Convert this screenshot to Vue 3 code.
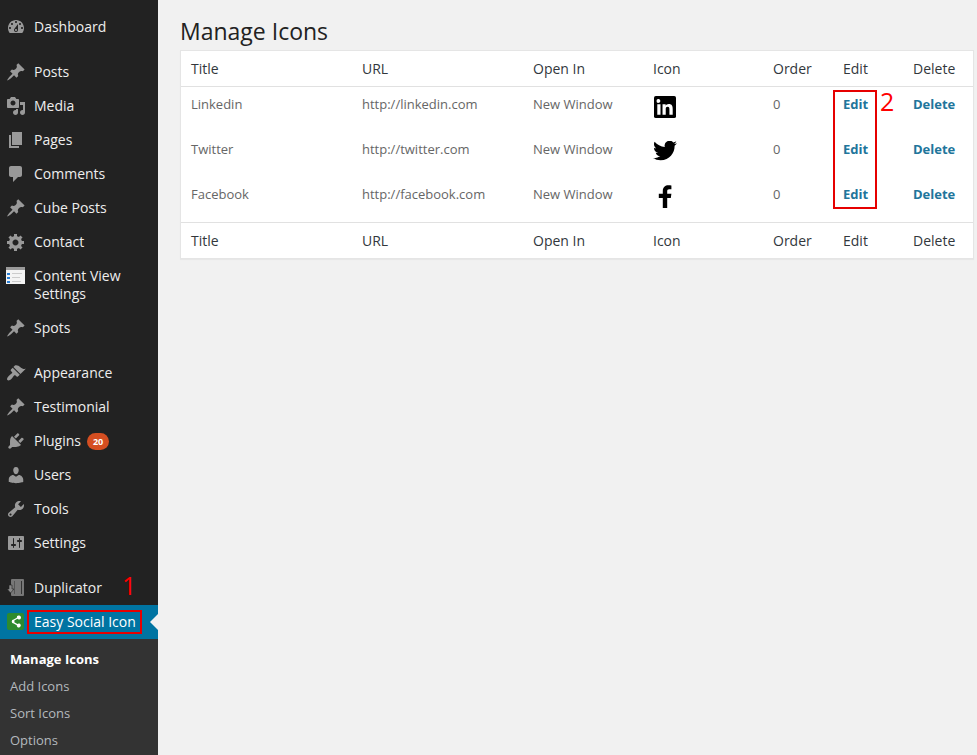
<template>
  <div class="page">
    <aside class="sidebar">
      <ul v-for="(group, g) in menu" :key="g" class="menu-group">
        <li v-for="item in group" :key="item.label" class="menu-item">
          <svg v-if="item.icon" class="menu-icon" viewBox="0 0 20 20"><path :d="icons[item.icon]" /></svg>
          <svg v-else-if="item.custom === 'cv'" class="menu-icon" viewBox="0 0 20 20">
            <rect x="0" y="1" width="19" height="17" fill="#f4f4f4" />
            <rect x="0" y="1" width="19" height="3" fill="#9a9a9a" />
            <rect x="1" y="7" width="3" height="2" fill="#2a7fd5" />
            <rect x="1" y="11" width="3" height="2" fill="#2a7fd5" />
            <rect x="1" y="15" width="3" height="2" fill="#2a7fd5" />
            <rect x="6" y="7" width="10" height="1" fill="#ccc" />
            <rect x="6" y="11" width="8" height="1" fill="#ccc" />
            <rect x="6" y="15" width="9" height="1" fill="#ccc" />
          </svg>
          <svg v-else class="menu-icon" viewBox="0 0 20 20">
            <rect x="5" y="1" width="13" height="17" rx="1" fill="#777" />
            <rect x="15" y="3" width="1" height="13" fill="#333" />
            <rect x="8" y="3" width="1" height="13" fill="#555" />
            <path d="M3 7h3v4h2l-3.5 4L1 11h2z" fill="#888" stroke="#222" stroke-width=".6" />
          </svg>
          <span class="menu-label">{{ item.label }}</span>
          <span v-if="item.badge" class="badge">{{ item.badge }}</span>
        </li>
      </ul>

      <div class="menu-item current">
        <svg class="menu-icon" viewBox="0 0 20 20">
          <rect x="1" y="1" width="17" height="17" rx="2" fill="#2e8b2e" />
          <path d="M13 3.5a2 2 0 1 1-1.6 3.2L8.3 8.6a2 2 0 0 1 0 1.6l3.1 1.8a2 2 0 1 1-.6 1.2L7.7 11.4a2 2 0 1 1 0-4l3.1-1.7A2 2 0 0 1 13 3.5z" fill="#fff" />
        </svg>
        <span class="menu-label">Easy Social Icon</span>
        <span class="mark-one"></span>
        <span class="mark-number one">1</span>
      </div>
      <ul class="submenu">
        <li v-for="(sub, i) in submenu" :key="sub" :class="{ active: i === 0 }">{{ sub }}</li>
      </ul>
    </aside>

    <main class="content">
      <h1>Manage Icons</h1>
      <div class="card">
        <table>
          <colgroup>
            <col v-for="(w, i) in widths" :key="i" :style="{ width: w + 'px' }" />
          </colgroup>
          <thead>
            <tr><th v-for="c in columns" :key="c">{{ c }}</th></tr>
          </thead>
          <tbody>
            <tr v-for="row in rows" :key="row.title">
              <td>{{ row.title }}</td>
              <td>{{ row.url }}</td>
              <td>New Window</td>
              <td class="icon-cell">
                <svg v-if="row.icon === 'linkedin'" class="social linkedin" viewBox="0 0 24 24">
                  <rect x="0" y="0" width="24" height="24" rx="2" fill="#000" />
                  <path fill="#fff" d="M20.4 20.4h-3.6v-5.6c0-1.3 0-3-1.9-3s-2.1 1.4-2.1 2.9v5.7H9.3V9h3.4v1.6c.5-.9 1.7-1.9 3.4-1.9 3.6 0 4.3 2.4 4.3 5.5zM5.3 7.4a2.1 2.1 0 1 1 0-4.1 2.1 2.1 0 0 1 0 4.1zm1.8 13H3.6V9h3.5z" />
                </svg>
                <svg v-else-if="row.icon === 'twitter'" class="social twitter" viewBox="0 0 24 20">
                  <path transform="translate(0 -2.4)" d="M24 4.6a10 10 0 0 1-2.9.8 5 5 0 0 0 2.2-2.8c-1 .6-2 1-3.1 1.2a4.9 4.9 0 0 0-8.4 4.5C7.7 8.1 4.1 6.1 1.6 3.2A4.8 4.8 0 0 0 1 5.6c0 1.7.9 3.2 2.2 4.1a4.9 4.9 0 0 1-2.2-.6v.1a4.9 4.9 0 0 0 3.9 4.8 5 5 0 0 1-2.2.1 4.9 4.9 0 0 0 4.6 3.4A9.9 9.9 0 0 1 0 19.5a14 14 0 0 0 7.6 2.2c9 0 14-7.5 14-14v-.6A10 10 0 0 0 24 4.6z" />
                </svg>
                <svg v-else class="social facebook" viewBox="0 0 14 23">
                  <path d="M9.2 23V12.9h3.6l.6-4.1H9.2V6.3c0-1.2.4-2 2-2h2.2V.5C13 .4 11.8.3 10.4.3 7.3.3 4.8 2.2 4.8 5.9v2.9H.8v4.1h4V23z" />
                </svg>
              </td>
              <td>0</td>
              <td><a>Edit</a></td>
              <td><a>Delete</a></td>
            </tr>
          </tbody>
          <tfoot>
            <tr><th v-for="c in columns" :key="c">{{ c }}</th></tr>
          </tfoot>
        </table>
        <span class="mark-two"></span>
        <span class="mark-number two">2</span>
      </div>
    </main>
  </div>
</template>

<script setup>
const icons = {
  dashboard: 'M3.76 16h12.48c1.1-1.37 1.76-3.11 1.76-5 0-4.42-3.58-8-8-8s-8 3.58-8 8c0 1.89.66 3.63 1.76 5zM10 4c.55 0 1 .45 1 1s-.45 1-1 1-1-.45-1-1 .45-1 1-1zM6 6c.55 0 1 .45 1 1s-.45 1-1 1-1-.45-1-1 .45-1 1-1zm8 0c.55 0 1 .45 1 1s-.45 1-1 1-1-.45-1-1 .45-1 1-1zm-5.37 5.55L12 7v6c0 1.1-.9 2-2 2s-2-.9-2-2c0-.57.24-1.08.63-1.45zM4 10c.55 0 1 .45 1 1s-.45 1-1 1-1-.45-1-1 .45-1 1-1zm12 0c.55 0 1 .45 1 1s-.45 1-1 1-1-.45-1-1 .45-1 1-1zm-5 3c0-.55-.45-1-1-1s-1 .45-1 1 .45 1 1 1 1-.45 1-1z',
  pin: 'M10.44 3.02l1.82-1.82 6.36 6.35-1.83 1.82c-1.05-.68-2.48-.57-3.41.36l-.75.75c-.92.93-1.04 2.35-.35 3.41l-1.83 1.82-2.41-2.41-2.8 2.79c-.42.42-3.38 2.71-3.8 2.29s1.86-3.39 2.28-3.81l2.79-2.79L4.1 9.36l1.83-1.82c1.05.69 2.48.57 3.4-.36l.75-.75c.93-.92 1.05-2.35.36-3.41z',
  media: 'M13 11V4c0-.55-.45-1-1-1h-1.67L9 1H5L3.67 3H2c-.55 0-1 .45-1 1v7c0 .55.45 1 1 1h10c.55 0 1-.45 1-1zM7 4.5c1.38 0 2.5 1.12 2.5 2.5S8.38 9.5 7 9.5 4.5 8.38 4.5 7 5.62 4.5 7 4.5zM14 6h5v10.5c0 1.38-1.12 2.5-2.5 2.5S14 17.88 14 16.5s1.12-2.5 2.5-2.5c.17 0 .34.02.5.05V9h-3V6zm-4 8.05V13h2v3.5c0 1.38-1.12 2.5-2.5 2.5S7 17.88 7 16.5 8.12 14 9.5 14c.17 0 .34.02.5.05z',
  pages: 'M6 15V2h10v13H6zm-1 1h8v2H3V5h2v11z',
  comments: 'M5 2h9c1.1 0 2 .9 2 2v7c0 1.1-.9 2-2 2h-2l-5 5v-5H5c-1.1 0-2-.9-2-2V4c0-1.1.9-2 2-2z',
  gear: 'M18 12h-2.18c-.17.7-.44 1.35-.81 1.93l1.54 1.54-2.1 2.1-1.54-1.54c-.58.36-1.23.63-1.91.79V19H8v-2.18c-.68-.16-1.33-.43-1.91-.79l-1.54 1.54-2.12-2.12 1.54-1.54c-.36-.58-.63-1.23-.79-1.91H1V9.03h2.17c.16-.7.44-1.35.8-1.94L2.43 5.55l2.1-2.1 1.54 1.54c.58-.37 1.24-.64 1.93-.81V2h3v2.18c.68.16 1.33.43 1.91.79l1.54-1.54 2.12 2.12-1.54 1.54c.36.59.64 1.24.8 1.94H18V12zm-8.5 1.5c1.66 0 3-1.34 3-3s-1.34-3-3-3-3 1.34-3 3 1.34 3 3 3z',
  appearance: 'M14.48 11.06L7.41 3.99l1.5-1.5c.5-.56 2.3-.47 3.51.32 1.21.8 1.43 1.28 2.91 2.1 1.18.64 2.45 1.26 4.45.85zm-.71.71L6.7 4.7 4.93 6.47c-.39.39-.39 1.02 0 1.41l1.06 1.06c.39.39.39 1.03 0 1.42-.6.6-1.43 1.11-2.21 1.69-.35.26-.7.53-1.01.84C1.43 14.23.4 16.08 1.4 17.07c.99 1 2.84-.03 4.18-1.36.31-.31.58-.66.85-1.02.57-.78 1.08-1.61 1.69-2.21.39-.39 1.02-.39 1.41 0l1.06 1.06c.39.39 1.02.39 1.41 0z',
  plugins: 'M13.11 4.36L9.87 7.6 8 5.73l3.24-3.24c.35-.34 1.05-.2 1.56.32.52.51.66 1.21.31 1.55zm-8 1.77l.91-1.12 9.01 9.01-1.19.84c-.71.71-2.63 1.16-3.82 1.16H6.14L4.9 17.26c-.59.59-1.54.59-2.12 0-.59-.58-.59-1.53 0-2.12l1.24-1.24v-3.88c0-1.13.4-3.19 1.09-3.89zm7.26 3.97l3.24-3.24c.34-.35 1.04-.21 1.55.31.52.51.66 1.21.31 1.55l-3.24 3.25z',
  users: 'M10 9.25c-2.27 0-2.73-3.44-2.73-3.44C7 4.02 7.82 2 9.97 2c2.16 0 2.98 2.02 2.71 3.81 0 0-.41 3.44-2.68 3.44zm0 2.57L12.72 10c2.39 0 4.52 2.33 4.52 4.53v2.49s-3.65 1.13-7.24 1.13c-3.65 0-7.24-1.13-7.24-1.13v-2.49c0-2.25 1.94-4.48 4.47-4.48z',
  tools: 'M16.68 9.77c-1.34 1.34-3.3 1.67-4.95.99l-5.41 6.52c-.99.99-2.59.99-3.58 0s-.99-2.59 0-3.57l6.52-5.42c-.68-1.65-.35-3.61.99-4.95 1.28-1.28 3.12-1.62 4.72-1.06l-2.89 2.89 2.82 2.82 2.86-2.87c.53 1.58.18 3.39-1.08 4.65zM3.81 16.21c.4.39 1.04.39 1.43 0 .4-.4.4-1.04 0-1.43-.39-.4-1.03-.4-1.43 0-.39.39-.39 1.03 0 1.43z',
  sliders: 'M18 16V4c0-.55-.45-1-1-1H3c-.55 0-1 .45-1 1v12c0 .55.45 1 1 1h14c.55 0 1-.45 1-1zM8 11h1c.55 0 1 .45 1 1s-.45 1-1 1H8v1.5c0 .28-.22.5-.5.5s-.5-.22-.5-.5V13H6c-.55 0-1-.45-1-1s.45-1 1-1h1V5.5c0-.28.22-.5.5-.5s.5.22.5.5V11zm5-2h-1c-.55 0-1-.45-1-1s.45-1 1-1h1V5.5c0-.28.22-.5.5-.5s.5.22.5.5V7h1c.55 0 1 .45 1 1s-.45 1-1 1h-1v5.5c0 .28-.22.5-.5.5s-.5-.22-.5-.5V9z',
}

const menu = [
  [{ label: 'Dashboard', icon: 'dashboard' }],
  [
    { label: 'Posts', icon: 'pin' },
    { label: 'Media', icon: 'media' },
    { label: 'Pages', icon: 'pages' },
    { label: 'Comments', icon: 'comments' },
    { label: 'Cube Posts', icon: 'pin' },
    { label: 'Contact', icon: 'gear' },
    { label: 'Content View Settings', custom: 'cv' },
    { label: 'Spots', icon: 'pin' },
  ],
  [
    { label: 'Appearance', icon: 'appearance' },
    { label: 'Testimonial', icon: 'pin' },
    { label: 'Plugins', icon: 'plugins', badge: 20 },
    { label: 'Users', icon: 'users' },
    { label: 'Tools', icon: 'tools' },
    { label: 'Settings', icon: 'sliders' },
  ],
  [{ label: 'Duplicator', custom: 'dup' }],
]

const submenu = ['Manage Icons', 'Add Icons', 'Sort Icons', 'Options']

const columns = ['Title', 'URL', 'Open In', 'Icon', 'Order', 'Edit', 'Delete']
const widths = [171, 171, 120, 120, 70, 70, 70]

const rows = [
  { title: 'Linkedin', url: 'http://linkedin.com', icon: 'linkedin' },
  { title: 'Twitter', url: 'http://twitter.com', icon: 'twitter' },
  { title: 'Facebook', url: 'http://facebook.com', icon: 'facebook' },
]
</script>

<style>
html,
body {
  background: #f1f1f1;
}
</style>

<style scoped>
.page {
  display: flex;
  height: 755px;
  overflow: hidden;
  font-family: 'Open Sans', sans-serif;
  background: #f1f1f1;
}

.sidebar {
  flex: 0 0 158px;
  padding-top: 10px;
  background: #222;
}

.menu-group {
  list-style: none;
  margin: 0 0 11px;
  padding: 0;
}

.menu-item {
  position: relative;
  display: flex;
  align-items: flex-start;
  padding: 8px 6px 8px 0;
  font-size: 14px;
  line-height: 18px;
  color: #eee;
}

.menu-icon {
  flex: 0 0 20px;
  width: 20px;
  height: 20px;
  margin: -1px 8px -1px 6px;
  fill: #999;
}

.menu-label {
  flex: 0 1 auto;
}

.badge {
  flex: none;
  margin: 1px 0 0 6px;
  padding: 0 6px;
  border-radius: 9px;
  font-size: 9px;
  font-weight: 700;
  line-height: 17px;
  color: #fff;
  background: #d54e21;
}

.current {
  margin-top: -11px;
  color: #fff;
  background: #0074a2;
}

.current::after {
  content: '';
  position: absolute;
  top: 9px;
  right: 0;
  border: 8px solid transparent;
  border-right-color: #f1f1f1;
}

.mark-one {
  position: absolute;
  left: 27px;
  top: 5px;
  width: 115px;
  height: 24px;
  box-sizing: border-box;
  border: 2px solid #e60000;
}

.mark-number {
  position: absolute;
  font-family: 'Open Sans', sans-serif;
  font-size: 25px;
  font-weight: 400;
  line-height: 25px;
  color: #f00;
}

.mark-number.one {
  left: 122px;
  top: -32px;
}

.submenu {
  list-style: none;
  margin: 0;
  padding: 7px 0;
  background: #333;
  font-size: 13px;
  line-height: 27px;
  color: #b4b9be;
}

.submenu li {
  padding-left: 10px;
}

.submenu .active {
  font-weight: 700;
  color: #fff;
}

.content {
  flex: 1;
  min-width: 0;
  padding: 0 3px 0 22px;
}

h1 {
  margin: 17px 0 4px;
  font-size: 23px;
  font-weight: 400;
  line-height: 29px;
  color: #222;
}

.card {
  position: relative;
  border: 1px solid #e5e5e5;
  background: #fff;
  box-shadow: 0 1px 1px rgba(0, 0, 0, 0.04);
}

table {
  width: 792px;
  table-layout: fixed;
  border-collapse: separate;
  border-spacing: 0;
}

th {
  padding: 8px 10px;
  font-size: 14px;
  font-weight: 400;
  line-height: 18px;
  text-align: left;
  color: #32373c;
}

thead th {
  padding-top: 9px;
  border-bottom: 1px solid #e1e1e1;
}

tfoot th {
  padding-top: 9px;
  border-top: 1px solid #e1e1e1;
}

td {
  height: 45px;
  box-sizing: border-box;
  padding: 8px 10px;
  font-size: 13px;
  line-height: 18px;
  vertical-align: top;
  color: #666;
}

td a {
  font-weight: 700;
  color: #21759b;
}

.icon-cell {
  padding-top: 9px;
}

.social {
  display: block;
  fill: #000;
}

.linkedin {
  width: 22px;
  height: 22px;
  margin-left: 1px;
}

.twitter {
  width: 24px;
  height: 20px;
}

.facebook {
  width: 14px;
  height: 23px;
  margin: -1px 0 0 5px;
}

.mark-two {
  position: absolute;
  left: 652px;
  top: 39px;
  width: 44px;
  height: 119px;
  box-sizing: border-box;
  border: 2px solid #e60000;
}

.mark-number.two {
  left: 699px;
  top: 38px;
}
</style>
